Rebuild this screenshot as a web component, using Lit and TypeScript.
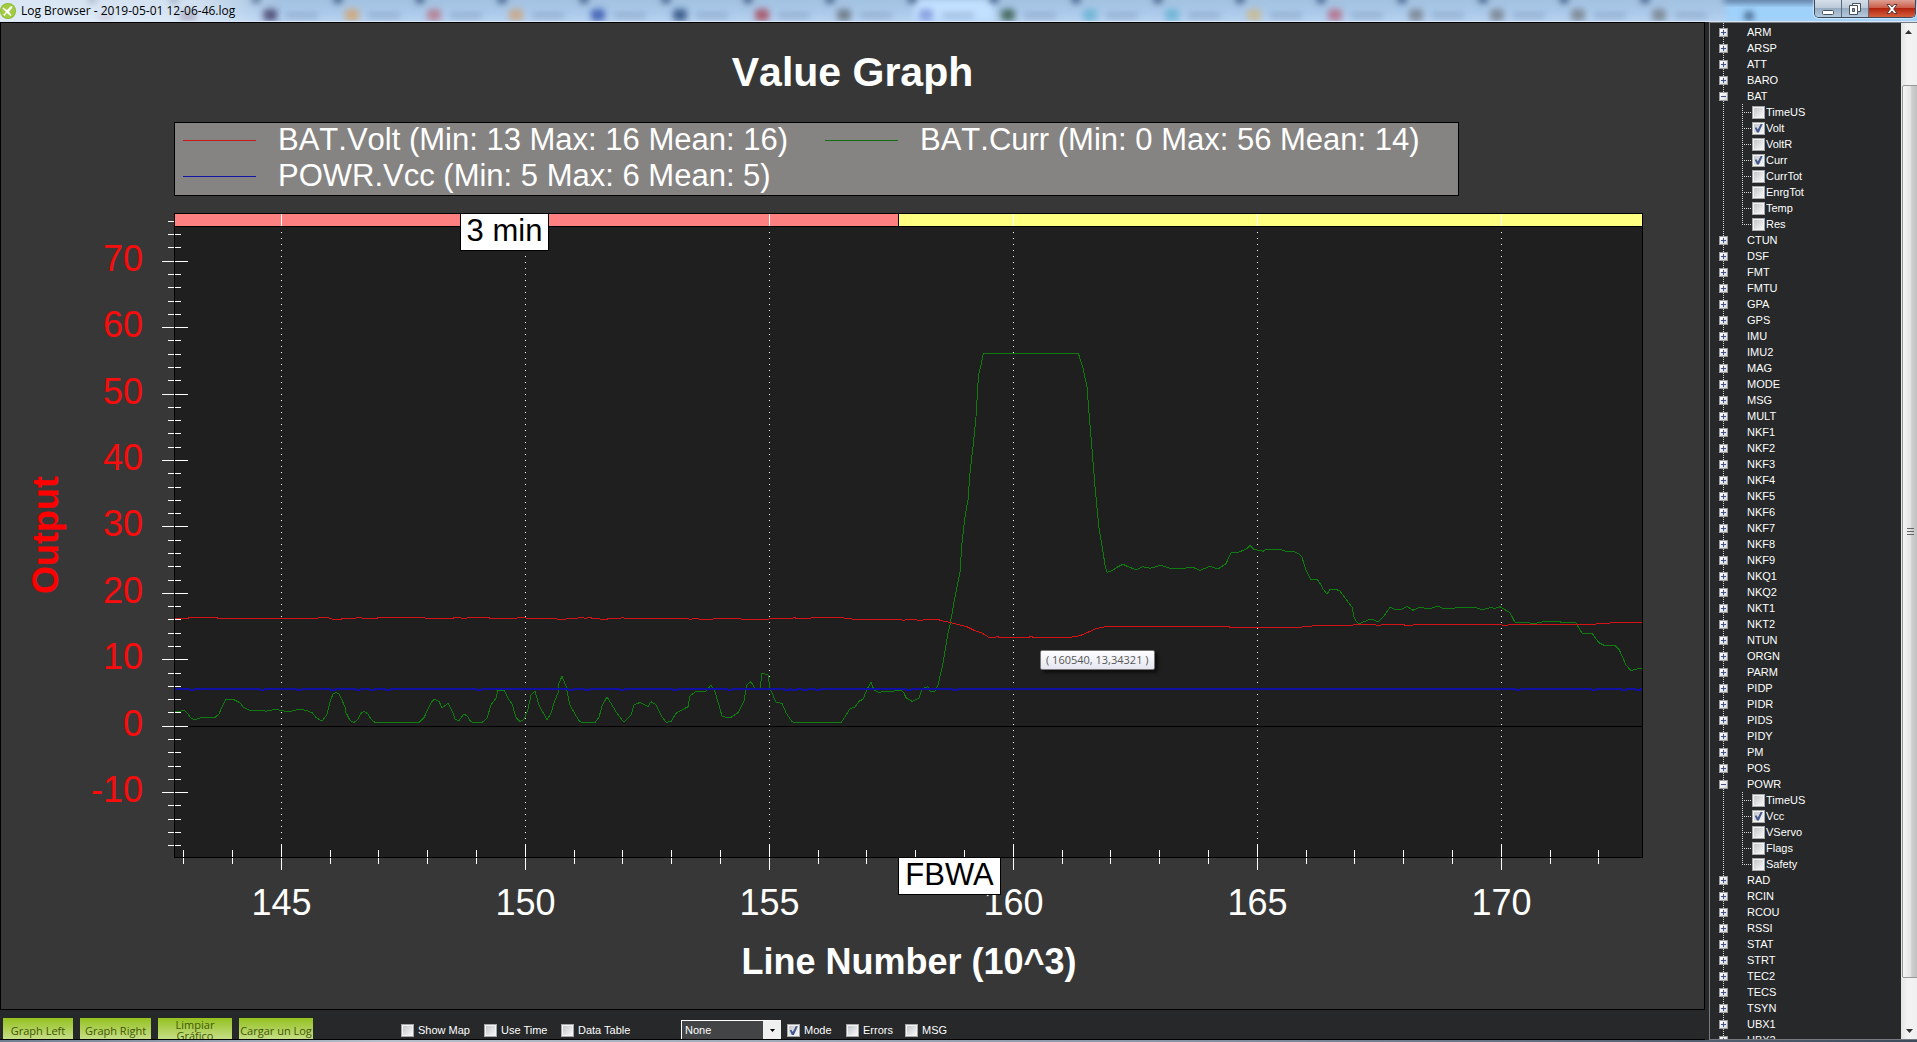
import { LitElement, html, svg, css, nothing } from "lit";
import { customElement, property, state } from "lit/decorators.js";

interface TreeItem {
  name: string;
  fields?: { name: string; on?: boolean }[];
}

const TREE: TreeItem[] = [
  ..."ARM ARSP ATT BARO".split(" ").map((name) => ({ name })),
  {
    name: "BAT",
    fields: [
      { name: "TimeUS" },
      { name: "Volt", on: true },
      { name: "VoltR" },
      { name: "Curr", on: true },
      { name: "CurrTot" },
      { name: "EnrgTot" },
      { name: "Temp" },
      { name: "Res" },
    ],
  },
  ...(
    "CTUN DSF FMT FMTU GPA GPS IMU IMU2 MAG MODE MSG MULT NKF1 NKF2 NKF3 NKF4 NKF5 " +
    "NKF6 NKF7 NKF8 NKF9 NKQ1 NKQ2 NKT1 NKT2 NTUN ORGN PARM PIDP PIDR PIDS PIDY PM POS"
  )
    .split(" ")
    .map((name) => ({ name })),
  {
    name: "POWR",
    fields: [
      { name: "TimeUS" },
      { name: "Vcc", on: true },
      { name: "VServo" },
      { name: "Flags" },
      { name: "Safety" },
    ],
  },
  ..."RAD RCIN RCOU RSSI STAT STRT TEC2 TECS TSYN UBX1 UBX2".split(" ").map((name) => ({ name })),
];

/* Traces are logged on a grid whose plot area spans these bounds. */
const GRID = { x0: 174, x1: 1642, y0: 213, y1: 857 };

const CURR =
  "175,711 181,711 184,710 188,714 191,718 195,719.7 202,717.3 215,717.3 219,714 222,706.7 226,699.3 233,699.3 240,702.7 243,707 250,710.3 261,710.3 266,711.3 275,709.3 286,711.3 291,711.3 299,709.3 306,710.3 312,712.7 316,717.3 321,720.7 323,720 327,714.3 330,701.7 333,694 336,692.3 339,694 345,706.7 346,712.7 350,720.3 354,722.5 358,719.3 361,713.3 364,711.3 368,714 371,719.3 375,722.5 419,722.5 424,717.7 431,702.7 434,699.3 439,701.3 442,708 448,703.3 453,712.7 455,719.3 459,720.7 464,714 468,716.7 470,720.7 473,722.5 482,722.5 487,718.3 491,705 496,698.3 498,690 504,690 508,698.3 512,704 516,717.3 520,721.7 524,719.3 528,709.3 531,695 535,691 539,705.3 547,719.7 551,713.3 554,702.7 558,692.7 559,683.3 562,676.3 566,686 568,696 570,705 575,714 579,720.7 582,722.5 595,722.5 599,717.3 602,706 607,696.7 612,705 617,713.3 624,722.3 631,715 634,705 640,702.3 648,706.7 651,701.7 656,704.7 662,716.7 666,722.3 671,721.7 676,713.3 688,706.7 690,696 696,691.3 706,691 711,685 715,692 719,705.3 722,716 726,717.3 731,717.3 738,712.7 744,700.7 747,684.7 751,681.7 755,688.3 760,688.3 762,673.3 768,674.7 770,688.3 776,702.3 782,703.3 786,712.7 792,721.7 794,722.5 841,722.5 844,718.3 850,708.7 855,707 859,701.3 863,699.3 867,689.3 871,682.3 874,690 879,692.3 886,691.3 902,690.7 904,693.3 906,697.7 912,701.3 919,698.3 922,688.7 928,686.7 930,691 935,691.3 938,685.3 943,663.3 948,633.3 950,625 955,596.7 960,572 962,543.3 965,516.7 968,500 970,473.3 973,446.7 976,416.7 978,383.3 979,373.3 981,365 983.4,353.5 1078.4,353.5 1083,368.3 1087,386.7 1089,413.3 1091,436.7 1095,486.7 1099,528.3 1103,551.7 1105,565 1107,572.3 1112,570.7 1117,567.3 1123,564.3 1128,566.7 1136,569.7 1143,566.7 1150,568.3 1161,565.3 1170,568.3 1184,568.3 1192,567 1200,570.3 1210,566.3 1218,569 1226,563.7 1231,552.7 1239,552 1246,549.3 1250,545.7 1254,549.3 1263,551.3 1266,549.3 1279,549.3 1288,551.7 1295,552 1299,553.7 1302,557.3 1306,570 1311,580 1317,579.3 1319,581.7 1323,588.7 1327,594.3 1330,589 1335,589 1340,591 1352,607.3 1354,616.7 1356,621 1359,623.7 1371,619 1378,621.7 1384,616 1390,607.3 1395,609.3 1402,609 1407,606.3 1413,610.3 1420,607 1428,609 1438,606.3 1443,608.3 1452,609 1457,607.3 1474,607.3 1483,609.7 1490,607.7 1495,608.3 1500,606.7 1510,612.7 1515,622.3 1536,623.3 1545,621.3 1557,621.3 1564,622.7 1576,623 1582,633.3 1592,633.3 1599,642.7 1605,645.7 1615,645.7 1619,649.3 1626,665 1631,670.7 1638,668.7 1642,668.7";

const VOLT =
  "175,618.5 187,618.5 190,617.5 216,617.5 219,618.5 317,618.5 319,617.5 328,617.5 333,619.5 341,619.5 342,618.5 355,618.5 357,617.5 361,617.5 363,618.5 377,618.5 378,617.5 424,617.5 426,618.5 452,618.5 455,617.5 460,617.5 462,618.5 466,618.5 468,617.5 488,617.5 491,618.5 516,618.5 518,617.5 525,617.5 527,618.5 556,618.5 558,619.5 565,619.5 567,618.5 577,618.5 579,617.5 583,617.5 585,618.5 589,617.5 594,618.5 605,619.5 610,618.5 620,618.5 622,617.5 626,618.5 688,618.5 690,619.5 694,618.5 703,619.5 712,619.5 714,618.5 740,618.5 742,619.5 768,619.5 770,618.5 792,618.5 794,617.5 797,618.5 810,618.5 812,617.5 842,617.5 846,618.5 857,619.5 901,619.5 903,620.5 907,619.5 916,619.5 918,620.5 922,620.5 924,619.5 938,619.5 941,620.5 951,622.7 967,626.7 975,630.7 982,633 989,637.5 995,637.5 997,636.5 1000,637.5 1028,637.5 1031,636.5 1034,637.5 1069,637.5 1080,635.7 1096,628.7 1106,626.5 1228,626.5 1231,627.5 1300,627.5 1304,626.5 1320,625.5 1352,625.5 1354,624.5 1375,624.5 1377,625.5 1385,624.5 1403,624.5 1406,625.5 1420,624.5 1500,624.5 1504,625.5 1512,624.5 1594,624.5 1598,623.5 1623,622.5 1642,622.5";

/* Columns where the supply rail dips by one step. */
const VCC_DIPS = [192, 262, 299, 333, 358, 372, 388, 479, 571, 587, 622, 675, 730, 787, 794, 805, 818, 909, 955, 1518, 1594, 1624, 1638];
const VCC =
  "175,689 " +
  VCC_DIPS.map((x) => `${x - 4},689 ${x - 1},690 ${x + 1},690 ${x + 4},689`).join(" ") +
  " 1642,689";

const LEGEND = [
  { label: "BAT.Volt (Min: 13 Max: 16 Mean: 16)", tone: "volt" },
  { label: "BAT.Curr (Min: 0 Max: 56 Mean: 14)", tone: "curr" },
  { label: "POWR.Vcc (Min: 5 Max: 6 Mean: 5)", tone: "vcc" },
];

const SERIES = [
  { points: CURR, tone: "curr" },
  { points: VOLT, tone: "volt" },
  { points: VCC, tone: "vcc" },
];

@customElement("tick-box")
class TickBox extends LitElement {
  static styles = css`
    :host {
      display: block;
    }
    label {
      display: flex;
      align-items: center;
      gap: var(--tick-gap, 4px);
      white-space: nowrap;
    }
    input {
      appearance: none;
      box-sizing: border-box;
      flex: none;
      display: grid;
      width: 13px;
      height: 13px;
      margin: 0;
      padding: 1px;
      border: 1px solid #a4a6a8;
      background:
        linear-gradient(135deg, #c4c7ca, #f6f6f6) content-box,
        #f4f4f4;
    }
    input:checked::after {
      content: "";
      width: 9px;
      height: 9px;
      background: #43578f;
      clip-path: polygon(8% 48%, 26% 42%, 42% 68%, 76% 0, 98% 4%, 54% 100%, 32% 100%);
    }
  `;
  @property() label = "";
  @property({ type: Boolean }) on = false;

  render() {
    return html`<label><input type="checkbox" .checked=${this.on} />${this.label}</label>`;
  }
}

@customElement("log-title-bar")
class LogTitleBar extends LitElement {
  static styles = css`
    :host {
      position: relative;
      display: flex;
      align-items: flex-start;
      height: 22px;
      box-sizing: border-box;
      overflow: hidden;
      background: linear-gradient(#a3c1e0, #abc9ea 60%, #b7d2ef);
      border-bottom: 1px solid #d8e6f5;
    }
    .glass {
      position: absolute;
      inset: 0;
      width: 100%;
      height: 100%;
    }
    .caption {
      position: relative;
      flex: 1;
      display: flex;
      align-items: center;
      gap: 5px;
      height: 22px;
      margin: 0;
      color: #000;
      font: 400 12px/22px "Open Sans", "Noto Sans", sans-serif;
    }
    .buttons {
      position: relative;
      display: flex;
      margin-right: 1px;
      border: 1px solid #3c4a5c;
      border-top: 0;
      border-radius: 0 0 5px 5px;
      overflow: hidden;
      box-shadow: 0 0 1px 1px #ffffff80;
    }
    button {
      box-sizing: border-box;
      display: grid;
      place-items: center;
      width: 27px;
      height: 17px;
      padding: 0;
      border: 0;
      border-right: 1px solid #5c6b7d;
      background: linear-gradient(#d5dfe9, #bccad9 45%, #98acc1 50%, #b5cadf);
    }
    button.close {
      width: 46px;
      border-right: 0;
      background: linear-gradient(#dfa094, #cc5f4b 45%, #b3240f 50%, #d4603c);
    }
  `;

  render() {
    const tints = ["#2a2350", "#d8a060", "#b87080", "#d0a070", "#2846a8", "#1e3c70", "#a83848", "#606870", "#7a90d8", "#2a5038", "#60b0d0", "#60b0d0", "#d0b880", "#b86078", "#707880", "#707880", "#707880", "#707880"];
    return html`
      <svg class="glass" aria-hidden="true">
        <defs>
          <filter id="soft" x="-50%" y="-50%" width="200%" height="200%"><feGaussianBlur stdDeviation="3" /></filter>
          <linearGradient id="halo"><stop offset="0" stop-color="#fff" stop-opacity=".6" /><stop offset=".7" stop-color="#fff" stop-opacity=".5" /><stop offset="1" stop-color="#fff" stop-opacity="0" /></linearGradient>
        </defs>
        <rect x="914" y="0" width="80" height="22" fill="#c2e0ff" filter="url(#soft)" />
        <rect x="1726" y="3" width="200" height="20" fill="#9fd2fb" filter="url(#soft)" />
        <rect x="1724" y="-4" width="200" height="7" fill="#54779e" filter="url(#soft)" />
        <g filter="url(#soft)">
          ${tints.map((tint, i) => {
            const x = 270 + i * 82 - Math.max(0, i - 12);
            return svg`
              <circle cx=${x - 14} cy="-1" r="5" fill="#4d6b92" />
              <rect x=${x - 7} y="9" width="14" height="12" rx="4" fill=${tint} opacity=".75" />
              <rect x=${x + 16} y="13" width="32" height="5" fill="#5f7da5" opacity=".4" />`;
          })}
          <circle cx="92" cy="-1" r="5" fill="#4d6b92" /><circle cx="174" cy="-1" r="5" fill="#4d6b92" />
          <rect x="180" y="11" width="16" height="10" fill="#4a3a70" opacity=".7" />
          <rect x="98" y="13" width="14" height="8" fill="#8a78a8" opacity=".6" />
          <circle cx="1749" cy="16" r="5" fill="#47698f" />
        </g>
        <rect width="280" height="22" fill="url(#halo)" />
      </svg>
      <h1 class="caption">
        <svg width="16" height="16" viewBox="0 0 16 16" aria-hidden="true">
          <circle cx="8" cy="8" r="8" fill="#8dbb2c" />
          <circle cx="8" cy="8" r="7" fill="#a3cc45" />
          <path d="M3 4.500 7 7l3.500-3.500 2-.5-.5 2L9 8.500l2.500 4-1 .5L7 10l-2 2 .2 1.500L2.500 11l1.500.2L6 9 2.500 5.500z" fill="#fff" />
        </svg>
        Log Browser - 2019-05-01 12-06-46.log
      </h1>
      <div class="buttons">
        <button aria-label="Minimize">
          <svg width="14" height="12"><rect x="1.500" y="7.500" width="11" height="4" rx="1" fill="#fff" stroke="#47535f" /></svg>
        </button>
        <button aria-label="Restore">
          <svg width="14" height="13"><g fill="#fff" stroke="#47535f"><path d="M4.500 1.500h8v8h-8z" /><path d="M1.500 3.500h8v9h-8z" /></g><path d="M4.500 6.500h2v3h-2z" fill="#8fa3b8" stroke="#47535f" /></svg>
        </button>
        <button class="close" aria-label="Close">
          <svg width="14" height="12" viewBox="0 0 14 12"><path d="M2 1.500h3L7 4l2-2.500h3L8.700 6l3.300 4.500H9L7 8l-2 2.500H2L5.300 6z" fill="#fff" stroke="#5b3a3a" /></svg>
        </button>
      </div>
    `;
  }
}

@customElement("value-plot")
class ValuePlot extends LitElement {
  static styles = css`
    :host {
      position: relative;
      display: block;
      flex: 1;
      min-height: 0;
      overflow: hidden;
    }
    svg {
      position: absolute;
      inset: 0;
      width: 100%;
      height: 100%;
      font-family: "Liberation Sans", Arial, sans-serif;
    }
    .crisp {
      shape-rendering: crispEdges;
    }
    .area {
      fill: #1f1f1f;
    }
    .frame {
      fill: none;
      stroke: #000;
    }
    .axis {
      stroke: #000;
    }
    .tick {
      stroke: #fff;
    }
    .grid {
      stroke: #fff;
      stroke-dasharray: 1 5;
    }
    .line {
      fill: none;
      stroke-width: 1;
    }
    .volt {
      stroke: #d41414;
    }
    .curr {
      stroke: #0e7c0e;
    }
    .vcc {
      stroke: #1010a4;
      stroke-width: 2;
    }
    .mode-a {
      fill: #ff8080;
      stroke: #000;
    }
    .mode-b {
      fill: #ffff80;
      stroke: #000;
    }
    .num {
      font-size: 36px;
      fill: #fff;
    }
    .x {
      text-anchor: middle;
    }
    .y {
      text-anchor: end;
      fill: #f80c0c;
    }
    .name {
      font-size: 36px;
      font-weight: 700;
      text-anchor: middle;
      fill: #fff;
    }
    .name.out {
      fill: #f00;
    }
    .tag {
      fill: #fff;
      stroke: #000;
    }
    .tag-text {
      font-size: 31px;
      fill: #000;
      text-anchor: middle;
    }
    .tip {
      position: absolute;
      box-sizing: border-box;
      padding: 0 5px;
      border: 1px solid #767676;
      border-radius: 2px;
      background: linear-gradient(#fff, #e4e5f0);
      box-shadow: 3px 3px 3px #00000080;
      color: #575757;
      font: 11px/18px "Open Sans", "Noto Sans", sans-serif;
      white-space: nowrap;
    }
  `;
  @state() private w = 0;
  @state() private h = 0;
  private watcher = new ResizeObserver(() => this.measure());

  private measure() {
    this.w = this.clientWidth;
    this.h = this.clientHeight;
  }

  connectedCallback() {
    super.connectedCallback();
    this.watcher.observe(this);
  }

  disconnectedCallback() {
    this.watcher.disconnect();
    super.disconnectedCallback();
  }

  firstUpdated() {
    this.measure();
  }

  render() {
    if (!this.w) return nothing;
    const left = 173;
    const top = 9;
    const right = this.w - 62;
    const bottom = this.h - 152;
    const px = (gx: number) => left + ((gx - GRID.x0) * (right - left)) / (GRID.x1 - GRID.x0);
    const py = (gy: number) => top + ((gy - GRID.y0) * (bottom - top)) / (GRID.y1 - GRID.y0);
    const lineX = (v: number) => Math.floor(px(281.2 + (v - 145) * 48.8)) + 0.5;
    const outY = (v: number) => Math.floor(py(726.2 - v * 6.643)) + 0.5;
    const trace = (points: string) =>
      points
        .split(" ")
        .map((p) => p.split(",").map(Number))
        .map(([x, y]) => `${px(x)},${py(y)}`)
        .join(" ");
    const xs = Array.from({ length: 30 }, (_, i) => 143 + i);
    const ys = Array.from({ length: 48 }, (_, i) => -18 + i * 2);
    const split = lineX(157.65);
    const mid = (left + right) / 2;
    const tagA = Math.round(px(460)) + 0.5;

    return html`
      <svg role="img" aria-label="Value Graph">
        <g class="crisp">
          <rect class="area" x=${left} y=${top} width=${right - left} height=${bottom - top} />
          ${xs
            .filter((v) => v % 5 === 0)
            .map((v) => svg`<line class="grid" x1=${lineX(v)} x2=${lineX(v)} y1=${top + 1} y2=${bottom - 12} />`)}
          <rect class="frame" x=${left + 0.5} y=${top + 0.5} width=${right - left} height=${bottom - top} />
          <line class="axis" x1=${left} x2=${right} y1=${outY(0)} y2=${outY(0)} />
          ${ys.map((v) => {
            const major = v % 10 === 0;
            return svg`<line class="tick" x1=${left - (major ? 12 : 6)} x2=${left} y1=${outY(v)} y2=${outY(v)} />
              <line class="tick" x1=${left + 1} x2=${left + (major ? 14 : 7)} y1=${outY(v)} y2=${outY(v)} />`;
          })}
          ${xs.map((v) => {
            const size = v % 5 === 0 ? 13 : 7;
            return svg`<line class="tick" x1=${lineX(v)} x2=${lineX(v)} y1=${bottom - size} y2=${bottom} />
              <line class="tick" x1=${lineX(v)} x2=${lineX(v)} y1=${bottom + 1} y2=${bottom + size} />`;
          })}
          ${SERIES.map((s) => svg`<polyline class="line ${s.tone}" points=${trace(s.points)} />`)}
          <rect class="mode-a" x=${left + 0.5} y=${top + 0.5} width=${split - left - 0.5} height="13" />
          <rect class="mode-b" x=${split} y=${top + 0.5} width=${right + 0.5 - split} height="13" />
          ${xs
            .filter((v) => v % 5 === 0)
            .map((v) => svg`<line class="tick" x1=${lineX(v)} x2=${lineX(v)} y1=${top + 1} y2=${top + 13} />`)}
        </g>
        ${ys
          .filter((v) => v % 10 === 0)
          .map((v) => svg`<text class="num y" x=${left - 31} y=${outY(v) + 9}>${v}</text>`)}
        ${xs
          .filter((v) => v % 5 === 0)
          .map((v) => svg`<text class="num x" x=${lineX(v)} y=${bottom + 58}>${v}</text>`)}
        <text class="name" x=${mid + 1} y=${bottom + 117}>Line Number (10^3)</text>
        <text class="name out" transform="translate(57 ${(top + bottom) / 2}) rotate(-90)">Output</text>
        <rect class="tag crisp" x=${tagA} y=${top + 0.5} width="88" height="37" />
        <text class="tag-text" x=${tagA + 44} y=${top + 28}>3 min</text>
        <rect class="tag crisp" x=${split} y=${bottom + 0.5} width="102" height="37" />
        <text class="tag-text" x=${split + 51} y=${bottom + 28}>FBWA</text>
      </svg>
      <div class="tip" style="left:${px(1040)}px;top:${py(650)}px">( 160540, 13,34321 )</div>
    `;
  }
}

@customElement("log-tree")
class LogTree extends LitElement {
  static styles = css`
    :host {
      display: flex;
      box-sizing: border-box;
      width: 208px;
      min-height: 0;
      border: solid #777b80;
      border-width: 1px 0 1px 1px;
      background: #262829;
      color: #fff;
      font: 11px/16px "Liberation Sans", Arial, sans-serif;
    }
    .scroll {
      flex: 1;
      min-width: 0;
      overflow: hidden;
    }
    ul {
      list-style: none;
      margin: 0;
      padding: 0;
    }
    .root {
      padding: 1px 0 0 9px;
      background: repeating-linear-gradient(#d8d8d8 0 1px, transparent 1px 2px) 13px 0 / 1px 100% no-repeat;
    }
    .node {
      display: flex;
      align-items: center;
      gap: 19px;
      height: 16px;
    }
    .toggle {
      box-sizing: border-box;
      display: grid;
      place-items: center;
      width: 9px;
      height: 9px;
      padding: 0;
      border: 1px solid #9a9a9a;
      background: linear-gradient(135deg, #fff, #d8dade);
    }
    .toggle svg {
      width: 5px;
      height: 5px;
      stroke: #3c4f8c;
      shape-rendering: crispEdges;
    }
    .fields {
      margin-left: 23px;
      background: repeating-linear-gradient(#d8d8d8 0 1px, transparent 1px 2px) 0 0 / 1px calc(100% - 8px) no-repeat;
    }
    .fields li {
      height: 16px;
      padding-left: 10px;
      background: repeating-linear-gradient(90deg, #d8d8d8 0 1px, transparent 1px 2px) 0 8px / 10px 1px no-repeat;
    }
    tick-box {
      --tick-gap: 1px;
    }
    .bar {
      display: flex;
      flex-direction: column;
      width: 16px;
      background: linear-gradient(90deg, #e3e3e3, #f3f3f3 40%, #f0f0f0);
    }
    .bar svg {
      width: 16px;
      height: 17px;
      flex: none;
    }
    .rail {
      flex: 1;
      padding: 45px 0 44px 1px;
      display: flex;
    }
    .thumb {
      flex: 1;
      display: grid;
      place-items: center;
      border: 1px solid #979797;
      border-radius: 2px;
      background: linear-gradient(90deg, #f5f5f5, #e6e6e6 45%, #cfcfcf 55%, #bcbcbc);
    }
  `;

  render() {
    return html`
      <div class="scroll">
        <ul class="root">
          ${TREE.map(
            (item) => html`<li>
              <div class="node">
                <button class="toggle" aria-label="Toggle ${item.name}">
                  <svg viewBox="0 0 5 5"><path d=${item.fields ? "M0 2.500h5" : "M0 2.500h5M2.500 0v5"} /></svg>
                </button>
                <span>${item.name}</span>
              </div>
              ${item.fields
                ? html`<ul class="fields">
                    ${item.fields.map((f) => html`<li><tick-box .label=${f.name} .on=${!!f.on}></tick-box></li>`)}
                  </ul>`
                : nothing}
            </li>`,
          )}
        </ul>
      </div>
      <div class="bar" aria-hidden="true">
        <svg viewBox="0 0 16 17"><path d="M4 11h7L7.500 7z" fill="#333" /></svg>
        <div class="rail">
          <div class="thumb">
            <svg viewBox="0 0 16 17"><path d="M4 5.500h7M4 8.500h7M4 11.500h7" stroke="#666" /></svg>
          </div>
        </div>
        <svg viewBox="0 0 16 17"><path d="M5 7h7L8.500 11z" fill="#333" /></svg>
      </div>
    `;
  }
}

@customElement("log-actions")
class LogActions extends LitElement {
  static styles = css`
    :host {
      display: flex;
      align-items: flex-start;
      box-sizing: border-box;
      height: 30px;
      overflow: hidden;
      padding-left: 3px;
      background: #262829;
      border-bottom: 1px solid #000;
      color: #fff;
      font: 11px/13px "Liberation Sans", Arial, sans-serif;
    }
    .buttons {
      display: grid;
      grid-template-columns: 70px 71px 74px 74px;
      gap: 7px;
      width: 398px;
      padding-top: 8px;
    }
    button {
      height: 24px;
      padding: 0;
      border: 0;
      background: linear-gradient(#94c11f, #cde296);
      color: #405704;
      font: 11px/11px "Open Sans", "Noto Sans", sans-serif;
    }
    .checks {
      display: grid;
      padding-top: 14px;
    }
    .view {
      grid-template-columns: 83px 77px 120px;
    }
    .marks {
      grid-template-columns: 59px 59px 59px;
      padding-left: 6px;
    }
    .pick {
      position: relative;
      display: flex;
      margin-top: 10px;
      width: 100px;
      height: 21px;
    }
    select {
      appearance: none;
      box-sizing: border-box;
      width: 100%;
      margin: 0;
      padding: 0 3px;
      border: 1px solid #fff;
      border-right: 18px solid #f0f0f0;
      border-radius: 0;
      background: #434445;
      color: #fff;
      font: inherit;
    }
    .pick svg {
      position: absolute;
      right: 6px;
      top: 9px;
      pointer-events: none;
    }
  `;

  render() {
    return html`
      <div class="buttons">
        <button>Graph Left</button>
        <button>Graph Right</button>
        <button>Limpiar Gráfico</button>
        <button>Cargar un Log</button>
      </div>
      <div class="checks view">
        <tick-box label="Show Map"></tick-box>
        <tick-box label="Use Time"></tick-box>
        <tick-box label="Data Table"></tick-box>
      </div>
      <div class="pick">
        <select aria-label="Preset">
          <option>None</option>
        </select>
        <svg width="5" height="3" aria-hidden="true"><path d="M0 0h5L2.500 3z" /></svg>
      </div>
      <div class="checks marks">
        <tick-box label="Mode" on></tick-box>
        <tick-box label="Errors"></tick-box>
        <tick-box label="MSG"></tick-box>
      </div>
    `;
  }
}

@customElement("app-root")
class AppRoot extends LitElement {
  static styles = css`
    :host {
      display: grid;
      grid-template: auto minmax(0, 1fr) 2px / minmax(0, 1fr);
      height: 100vh;
      overflow: hidden;
      background: #262829;
      font-family: "Liberation Sans", Arial, sans-serif;
    }
    .body {
      display: grid;
      grid-template-columns: minmax(0, 1fr) 208px;
      gap: 4px;
      min-height: 0;
    }
    .left {
      display: flex;
      flex-direction: column;
      min-height: 0;
    }
    .panel {
      flex: 1;
      min-height: 0;
      display: flex;
      flex-direction: column;
      border: 1px solid #000;
      background: #373737;
    }
    h2 {
      margin: 25px 0 0;
      color: #fff;
      font-size: 41px;
      line-height: 48px;
      font-weight: 700;
      font-kerning: none;
      text-align: center;
    }
    .legend {
      display: grid;
      grid-template-columns: max-content max-content;
      column-gap: 37px;
      align-self: flex-start;
      margin: 26px 0 8px 173px;
      padding: 0 38px 0 8px;
      list-style: none;
      border: 1px solid #000;
      background: #868482;
      color: #fff;
      font-size: 31px;
      line-height: 34px;
      font-kerning: none;
    }
    .legend li {
      box-sizing: border-box;
      display: flex;
      align-items: center;
      gap: 22px;
      height: 36px;
      padding-bottom: 2px;
    }
    .swatch {
      width: 73px;
      height: 1px;
    }
    .volt {
      background: #c81818;
    }
    .curr {
      background: #107010;
    }
    .vcc {
      background: #1414a8;
    }
    .edge {
      background: linear-gradient(90deg, #6f7f92, #b5bfcb 20%, #8a97a8 60%, #3c4a5c);
    }
  `;

  render() {
    return html`
      <log-title-bar></log-title-bar>
      <div class="body">
        <div class="left">
          <div class="panel">
            <h2>Value Graph</h2>
            <ul class="legend">
              ${LEGEND.map((l) => html`<li><span class="swatch ${l.tone}"></span>${l.label}</li>`)}
            </ul>
            <value-plot></value-plot>
          </div>
          <log-actions></log-actions>
        </div>
        <log-tree></log-tree>
      </div>
      <div class="edge"></div>
    `;
  }
}
